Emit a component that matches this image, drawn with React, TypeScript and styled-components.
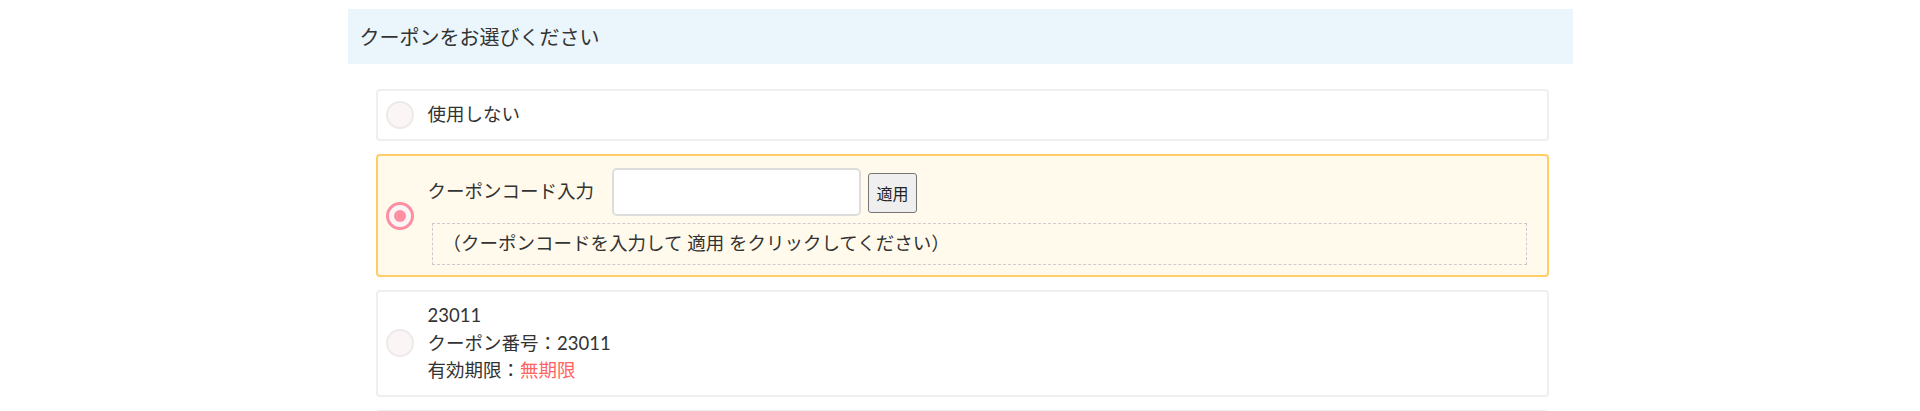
import React from "react";
import styled, { createGlobalStyle } from "styled-components";

const GlobalStyle = createGlobalStyle`
  html, body {
    margin: 0;
    padding: 0;
    background: #ffffff;
  }
  body {
    font-family: Lato, "Noto Sans CJK JP", sans-serif;
    color: #333333;
  }
`;

const Page = styled.div`
  width: 1225px;
  margin: 0 auto;
  padding-top: 9px;
`;

const Header = styled.div`
  height: 55px;
  display: flex;
  align-items: center;
  padding: 0 12px;
  background: #eaf6fb;
  font-size: 20px;
  color: #333;
  box-sizing: border-box;
`;

const List = styled.div`
  margin: 25px 24px 0 28px;
  display: flex;
  flex-direction: column;
  gap: 13px;
`;

const Card = styled.label<{ $active?: boolean }>`
  display: flex;
  align-items: center;
  gap: 14px;
  padding: 10px 8px;
  border: 2px solid ${(p) => (p.$active ? "#ffcd66" : "#efefef")};
  background: ${(p) => (p.$active ? "#fffaec" : "#ffffff")};
  border-radius: 4px;
  font-size: 18.5px;
  line-height: 27.5px;
  color: #333;
`;

const Radio = styled.span<{ $checked?: boolean }>`
  flex: none;
  width: 28px;
  height: 28px;
  border-radius: 50%;
  box-sizing: border-box;
  border: ${(p) => (p.$checked ? "3px solid #ff8fa3" : "2px solid #efeaea")};
  background: #fcf5f5;
  display: flex;
  align-items: center;
  justify-content: center;

  &::after {
    content: "";
    display: ${(p) => (p.$checked ? "block" : "none")};
    width: 12px;
    height: 12px;
    border-radius: 50%;
    background: #ff8fa3;
  }
`;

const Body = styled.div`
  flex: 1;
  display: flex;
  flex-direction: column;
`;

const CodeRow = styled.div`
  display: flex;
  align-items: center;
  height: 51px;
`;

const CodeLabel = styled.span`
  margin-right: 18px;
`;

const CodeInput = styled.input`
  width: 249px;
  height: 48px;
  box-sizing: border-box;
  border: 2px solid #dddddd;
  border-radius: 5px;
  background: #fff;
  margin-right: 7px;
  font-size: 16px;
  padding: 0 8px;
  outline: none;
`;

const ApplyButton = styled.button`
  width: 49px;
  height: 40px;
  margin-top: 3px;
  box-sizing: border-box;
  border: 1px solid #767676;
  border-radius: 3px;
  background: #efefef;
  color: #222;
  font-family: Lato, "Noto Sans CJK JP", sans-serif;
  font-size: 16px;
  padding: 0;
`;

const Hint = styled.div`
  margin: 6px 12px 0 4px;
  height: 42px;
  box-sizing: border-box;
  border: 1px dashed #cccccc;
  display: flex;
  align-items: center;
  padding-left: 10px;
  color: #333;
`;

const Line = styled.div``;

const Red = styled.span`
  color: #ff6464;
`;

export default function App() {
  return (
    <>
      <GlobalStyle />
      <Page>
        <Header>クーポンをお選びください</Header>
        <List>
          <Card>
            <Radio />
            <Body>
              <Line>使用しない</Line>
            </Body>
          </Card>
          <Card $active>
            <Radio $checked />
            <Body>
              <CodeRow>
                <CodeLabel>クーポンコード入力</CodeLabel>
                <CodeInput type="text" />
                <ApplyButton type="button">適用</ApplyButton>
              </CodeRow>
              <Hint>（クーポンコードを入力して 適用 をクリックしてください）</Hint>
            </Body>
          </Card>
          <Card>
            <Radio />
            <Body>
              <Line>23011</Line>
              <Line>クーポン番号：23011</Line>
              <Line>
                有効期限：<Red>無期限</Red>
              </Line>
            </Body>
          </Card>
          <Card>
            <Radio />
            <Body>
              <Line>23012</Line>
              <Line>クーポン番号：23012</Line>
              <Line>
                有効期限：<Red>無期限</Red>
              </Line>
            </Body>
          </Card>
        </List>
      </Page>
    </>
  );
}
